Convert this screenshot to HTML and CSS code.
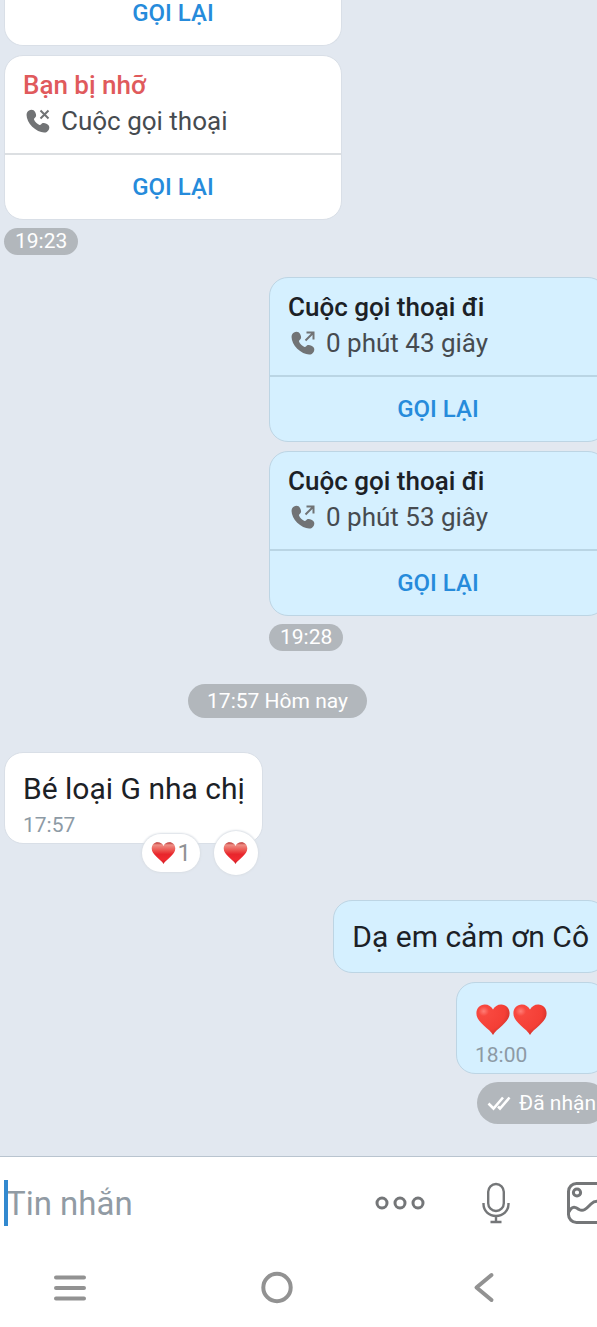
FILE: index.html
```html
<!DOCTYPE html>
<html lang="vi">
<head>
<meta charset="utf-8">
<meta name="viewport" content="width=device-width, initial-scale=1">
<title>Tin nhắn</title>
<link rel="stylesheet" href="styles.css">
</head>
<body>
<svg class="defs" aria-hidden="true">
  <defs>
    <radialGradient id="glow" cx="0.22" cy="0.22" r="0.8">
      <stop offset="0" stop-color="#ff7d76"/>
      <stop offset="0.2" stop-color="#f8483f"/>
      <stop offset="0.8" stop-color="#f43f36"/>
      <stop offset="1" stop-color="#d8352e"/>
    </radialGradient>
    <linearGradient id="gloss" x1="0" y1="0" x2="0" y2="1">
      <stop offset="0" stop-color="#b9302f"/>
      <stop offset="0.12" stop-color="#ee8f86"/>
      <stop offset="0.4" stop-color="#ec4c48"/>
      <stop offset="0.55" stop-color="#e8262c"/>
      <stop offset="0.8" stop-color="#f02a30"/>
      <stop offset="1" stop-color="#c81e25"/>
    </linearGradient>
    <symbol id="heart" viewBox="0 0 34 31">
      <path d="M17 31C15.500 28 11.500 25 7.500 21.300C3 17 .4 13.800 .4 9.300C.4 4 4 .5 8.800 .5C12.500 .5 15.500 2.500 17 5.500C18.500 2.500 21.500 .5 25.200 .5C30 .5 33.600 4 33.600 9.300C33.600 13.800 31 17 26.500 21.300C22.500 25 18.500 28 17 31Z"/>
    </symbol>
    <symbol id="phone" viewBox="0 0 24 24">
      <path d="M1.200 3.200C2.400 1 5.600-.2 7.600 1.300C9.300 2.800 10.600 5.700 9.900 7.400C9.300 8.700 7.700 9.200 8 10.500C8.800 12.700 11.300 15.200 13.500 16C14.900 16.300 15.300 14.600 16.700 14.100C18.500 13.500 21.400 14.900 22.700 16.500C24.100 18.400 22.900 21.600 20.800 22.900C17.500 24.700 10.800 22.300 6.200 17.800C1.700 13.200-.7 6.500 1.200 3.200Z"/>
    </symbol>
  </defs>
</svg>
<main class="chat">
  <section class="group group-in">
    <article class="card card-cut">
      <button class="call-back" type="button">GỌI LẠI</button>
    </article>
    <article class="card">
      <div class="card-head">
        <h2 class="card-title missed">Bạn bị nhỡ</h2>
        <p class="card-info">
          <svg class="call-icon" viewBox="0 0 24 24" aria-hidden="true"><use href="#phone"/><path class="mark" d="M14.500 1.500L22.500 9.500M22.500 1.500L14.500 9.500"/></svg>
          Cuộc gọi thoại
        </p>
      </div>
      <button class="call-back" type="button">GỌI LẠI</button>
    </article>
    <time class="pill">19:23</time>
  </section>

  <section class="group group-out group-calls">
    <article class="card">
      <div class="card-head">
        <h2 class="card-title">Cuộc gọi thoại đi</h2>
        <p class="card-info">
          <svg class="call-icon" viewBox="0 0 24 24" aria-hidden="true"><use href="#phone"/><path class="mark" d="M14.500 9.500L22.500 1.500M15.500 1.500H22.500V8.500"/></svg>
          0 phút 43 giây
        </p>
      </div>
      <button class="call-back" type="button">GỌI LẠI</button>
    </article>
    <article class="card">
      <div class="card-head">
        <h2 class="card-title">Cuộc gọi thoại đi</h2>
        <p class="card-info">
          <svg class="call-icon" viewBox="0 0 24 24" aria-hidden="true"><use href="#phone"/><path class="mark" d="M14.500 9.500L22.500 1.500M15.500 1.500H22.500V8.500"/></svg>
          0 phút 53 giây
        </p>
      </div>
      <button class="call-back" type="button">GỌI LẠI</button>
    </article>
    <time class="pill">19:28</time>
  </section>

  <div class="day"><time class="pill pill-day">17:57 Hôm nay</time></div>

  <section class="group group-in">
    <article class="bubble">
      <p class="text">Bé loại G nha chị</p>
      <time class="sent">17:57</time>
      <div class="reactions">
        <button class="reaction reaction-count" type="button"><svg class="heart-small" role="img" aria-label="Tim"><use href="#heart"/></svg>1</button>
        <button class="reaction reaction-add" type="button" aria-label="Thả tim"><svg class="heart-small" aria-hidden="true"><use href="#heart"/></svg></button>
      </div>
    </article>
  </section>

  <section class="group group-out group-replies">
    <article class="bubble bubble-plain">
      <p class="text">Dạ em cảm ơn Cô</p>
    </article>
    <article class="bubble bubble-hearts">
      <p class="text hearts">
        <svg class="heart" role="img" aria-label="Tim"><use href="#heart"/></svg>
        <svg class="heart" role="img" aria-label="Tim"><use href="#heart"/></svg>
      </p>
      <time class="sent">18:00</time>
    </article>
    <div class="pill pill-status">
      <svg class="ticks" viewBox="0 0 24 16" aria-hidden="true"><path d="M1.500 8.500L6.500 13.500L16 2.500M11 11.500L13 13.500L22.500 2.500"/></svg>
      Đã nhận
    </div>
  </section>
</main>

<footer class="bottom">
  <form class="composer">
    <div class="field">
      <input class="field-input" type="text" placeholder="Tin nhắn" aria-label="Tin nhắn">
      <span class="caret"></span>
    </div>
    <button class="tool" type="button" aria-label="Thêm">
      <svg class="tool-icon" width="50" height="42" viewBox="0 0 50 42"><g class="thick"><circle cx="7" cy="21" r="5"/><circle cx="25" cy="21" r="5"/><circle cx="43" cy="21" r="5"/></g></svg>
    </button>
    <button class="tool" type="button" aria-label="Ghi âm">
      <svg class="tool-icon" width="28" height="42" viewBox="0 0 28 42"><rect x="6.200" y="2" width="15.600" height="27" rx="7.800"/><path d="M1.500 21V22C1.500 29 7 34 14 34S26.500 29 26.500 22V21M14 34V40M8.500 40H19.500"/></svg>
    </button>
    <button class="tool" type="button" aria-label="Hình ảnh">
      <svg class="tool-icon" width="40" height="42" viewBox="0 0 40 42"><g class="thick"><rect x="1.500" y="1.500" width="48" height="39" rx="8"/><circle cx="10" cy="10.500" r="3.600"/><path d="M2 30C5 23 9 25 12 27.500C17 30 20 26 24 22C28 18 33 18 38 24"/></g></svg>
    </button>
  </form>
  <nav class="system-nav">
    <button class="nav-key" type="button" aria-label="Gần đây"><svg class="nav-icon" width="34" height="34" viewBox="0 0 34 34"><path d="M3 6.500H31M3 17H31M3 27.500H31"/></svg></button>
    <button class="nav-key" type="button" aria-label="Trang chủ"><svg class="nav-icon" width="34" height="34" viewBox="0 0 34 34"><circle cx="17" cy="16.500" r="13.700"/></svg></button>
    <button class="nav-key" type="button" aria-label="Quay lại"><svg class="nav-icon" width="34" height="34" viewBox="0 0 34 34"><path d="M24.500 4L9.500 16.500L24.500 29"/></svg></button>
  </nav>
</footer>
</body>
</html>
```
FILE: styles.css
```css
* { box-sizing: border-box; }

body {
  margin: 0;
  min-height: 100vh;
  display: flex;
  flex-direction: column;
  overflow-x: hidden;
  background: #e2e8f0;
  color: #1c2126;
  font-family: Roboto, "Noto Sans", sans-serif;
}

h2, p { margin: 0; }

button {
  border: 0;
  padding: 0;
  background: none;
  font: inherit;
  color: inherit;
}

svg { display: block; flex: none; }

.defs { position: absolute; width: 0; height: 0; }

.chat {
  flex: 1;
  display: flex;
  flex-direction: column;
  gap: 22px;
  padding: 0 0 32px 4px;
  overflow: hidden;
}

.group {
  display: flex;
  flex-direction: column;
  align-items: flex-start;
  gap: 9px;
}

/* sent messages run past the right edge of the window */
.group-out { margin-right: -10px; }
.group-calls { align-self: flex-end; }
.group-replies { align-items: flex-end; margin-top: 34px; }

.card {
  width: 338px;
  border: 1px solid #d9dfe7;
  border-radius: 19px;
  background: #ffffff;
}

.card-cut { margin-top: -21px; border-top: 0; }

.group-out .card,
.group-out .bubble {
  border-color: #bdd5e4;
  background: #d5f0ff;
}

.card-head { padding: 11px 18px 14px; }

.card-title {
  font-size: 26px;
  line-height: 36px;
  font-weight: 500;
}

.missed { color: #e05a5c; }

.card-info {
  display: flex;
  align-items: center;
  gap: 11px;
  padding-left: 3px;
  font-size: 26px;
  line-height: 36px;
  color: #464b50;
}

.call-icon {
  width: 24px;
  height: 24px;
  fill: #717375;
  overflow: visible;
}

.mark { fill: none; stroke: #717375; stroke-width: 2; }

.call-back {
  display: block;
  width: 100%;
  padding: 20px 0;
  border-top: 2px solid #dcdfe2;
  font-size: 24px;
  line-height: 24px;
  font-weight: 500;
  color: #268bdb;
}

.group-out .call-back { border-color: #bad5e4; }

.pill {
  padding: 0 11px;
  border-radius: 21px;
  background: #b2b7bc;
  color: #ffffff;
  font-size: 21px;
  line-height: 27px;
}

.group > .pill { margin-top: -1px; }

.day {
  display: flex;
  justify-content: center;
  padding: 11px 46px 12px 0;
}

.pill-day { padding: 0 19px; line-height: 34px; }

.bubble {
  position: relative;
  padding: 18px 17px 5px 18px;
  border: 1px solid #d9dfe7;
  border-radius: 19px;
  background: #ffffff;
}

.bubble-plain { padding-bottom: 17px; }
.bubble-hearts { width: 151px; }

.text { font-size: 30px; line-height: 36px; }

.sent {
  display: block;
  margin-top: 5px;
  font-size: 21px;
  line-height: 26px;
  color: #8d9aa5;
}

.reactions {
  position: absolute;
  right: 4px;
  bottom: -32px;
  display: flex;
  align-items: center;
  gap: 14px;
}

.reaction {
  display: flex;
  align-items: center;
  justify-content: center;
  gap: 2px;
  background: #ffffff;
  box-shadow: 0 0 2px 1px #dadfe5;
  font-size: 24px;
  color: #8f9295;
}

.reaction-count { width: 58px; height: 38px; border-radius: 20px; }
.reaction-add { width: 44px; height: 44px; border-radius: 50%; }

.heart-small { width: 25px; height: 22px; fill: url(#gloss); }

.hearts {
  display: flex;
  align-items: center;
  gap: 3px;
  min-height: 36px;
  padding-left: 1px;
}

.heart { width: 34px; height: 31px; fill: url(#glow); }

.pill-status {
  display: flex;
  align-items: center;
  gap: 8px;
  padding: 0 11px 0 10px;
  line-height: 42px;
}

.ticks {
  width: 24px;
  height: 16px;
  fill: none;
  stroke: #ffffff;
  stroke-width: 2.600;
}

.bottom {
  border-top: 1px solid #b9c4cf;
  background: #ffffff;
}

.composer {
  display: flex;
  align-items: center;
  gap: 57px;
  height: 92px;
  margin-right: -10px;
  padding-left: 4px;
}

.field { position: relative; flex: 1; min-width: 0; }

.field-input {
  display: block;
  width: 100%;
  height: 46px;
  padding: 0 2px;
  border: 0;
  outline: 0;
  background: none;
  font-family: inherit;
  font-size: 33px;
  color: #1c2126;
}

.field-input::placeholder { color: #919ba4; opacity: 1; }

.caret {
  position: absolute;
  left: 0;
  top: 0;
  width: 4px;
  height: 46px;
  background: #3289cf;
}

.tool-icon { fill: none; stroke: #747678; stroke-width: 2.400; }
.thick { stroke-width: 3; }

.system-nav {
  display: grid;
  grid-template-columns: repeat(3, 1fr);
  height: 78px;
  margin: 0 10px 0 -34px;
}

.nav-key { display: flex; align-items: center; justify-content: center; }

.nav-icon {
  fill: none;
  stroke: #929292;
  stroke-width: 4;
  stroke-linecap: round;
  stroke-linejoin: round;
}
```
